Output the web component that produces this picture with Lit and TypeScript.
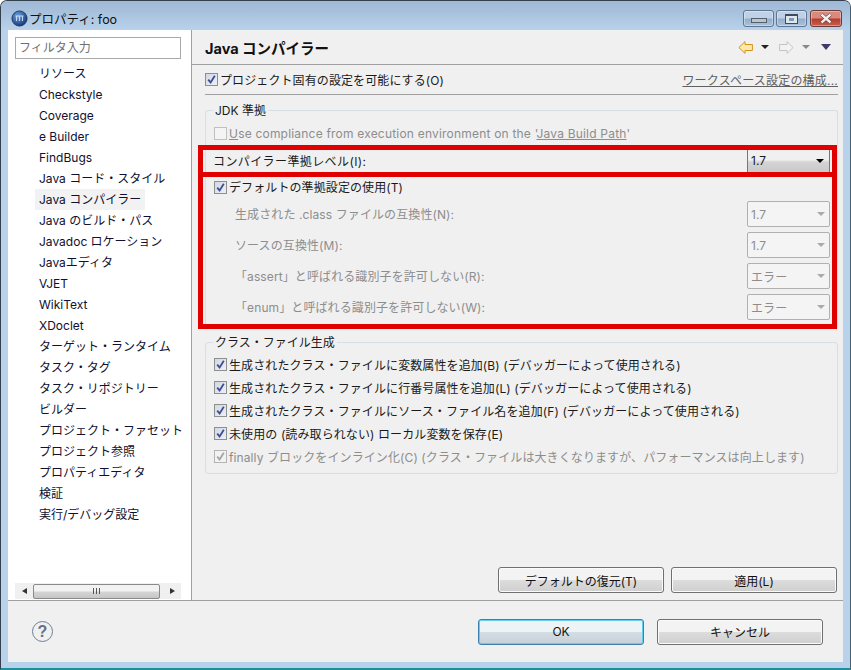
import { LitElement, html, css, svg } from "lit";
import { customElement } from "lit/decorators.js";

const TREE = ["リソース","Checkstyle","Coverage","e Builder","FindBugs","Java コード・スタイル","Java コンパイラー","Java のビルド・パス","Javadoc ロケーション","Javaエディタ","VJET","WikiText","XDoclet","ターゲット・ランタイム","タスク・タグ","タスク・リポジトリー","ビルダー","プロジェクト・ファセット","プロジェクト参照","プロパティエディタ","検証","実行/デバッグ設定"];

const check = (state: "on" | "off" | "dis" = "on") => html`<span class="cb ${state}">${state === "off" ? "" : svg`<svg width="11" height="11" viewBox="0 0 11 11"><path d="M2.2 5.6 L4.6 8.4 L8.8 1.8" fill="none" stroke="currentColor" stroke-width="1.8"/></svg>`}</span>`;

const sel = (t: string) => html`<div class="sel"><span>${t}</span><i class="tri"></i></div>`;

@customElement("app-root")
export class AppRoot extends LitElement {
  static styles = css`
    :host { display: block; width: 851px; height: 670px; overflow: hidden; background: #fff;
      font-family: "Inter", "Noto Sans CJK JP", sans-serif; font-size: 12px; color: #1a1a1a; }
    * { box-sizing: border-box; }
    .win { position: relative; width: 851px; height: 670px; display: flex; flex-direction: column; border-radius: 7px 7px 0 0;
      background: #b9d2eb; border: 1px solid #34404c; border-bottom: 2px solid #1f8f9c; border-right-color:#4a6070; overflow: hidden; }
    .title { height: 29px; flex: none; display: flex; align-items: center; padding: 6px 8px 0 10px; gap: 2px;
      background: linear-gradient(#9fb9d6, #a8c2de 40%, #b9d2eb); }
    .title .t { font-size: 12.5px; color: #111; flex: 1; margin-left: -1px; }
    .wb { width: 31px; height: 17px; border: 1px solid #5d7590; border-radius: 3px; display: flex; align-items: center; justify-content: center;
      background: linear-gradient(#bfd1e6 0 48%, #93aec9 52%, #a9c3dc); box-shadow: inset 0 0 0 1px rgba(255,255,255,.35); }
    .wb.x { background: linear-gradient(#d98a7e 0 48%, #b93a2c 52%, #c4604f); border-color: #6e3a34; width: 32px; margin-left:1px; }
    .min { width: 16px; height: 5px; background: #b9c4d0; border: 1px solid #55606e; margin-top: 3px; }
    .max { width: 13px; height: 10px; background: #dfe6ee; border: 1px solid #3f4b5c; border-top-width:2px; display:flex; align-items:center; justify-content:center; }
    .max::after { content:""; width:5px; height:3px; background:#7f9ab8; border:0; }

    .client { flex: 1; margin: 0 7px 6px; display: flex; flex-direction: column; background: #f0f0f0; min-height: 0; }
    .main { height: 571px; flex: none; display: flex; border-bottom: 1px solid #a0a0a0; }
    .left { width: 184px; flex: none; background: #fff; border-right: 1px solid #a0a0a0; padding: 7px 10px 0 7px; display: flex; flex-direction: column; }
    .filter { height: 22px; flex: none; border: 1px solid #a9a9a9; padding: 0 3px; line-height: 20px; color: #6f6f6f; }
    .tree { flex: 1; margin-top: 4px; padding-left: 20px; }
    .node { height: 21px; line-height: 21px; white-space: nowrap; width: max-content; padding: 0 4px; color: #101030; }
    .node.sel-node { background: #f2f2f2; }
    .hbar { height: 16px; flex: none; background: #f0f0f0; display: flex; align-items: center; margin: 0 0 1px; }
    .arrow { width: 18px; display:flex; justify-content:center; }
    .al { border: 3.5px solid transparent; border-right: 5px solid #333; border-left: 0; }
    .ar { border: 3.5px solid transparent; border-left: 5px solid #333; border-right: 0; }
    .thumb { width: 127px; height: 15px; border: 1px solid #8a8a8a; border-radius: 2px; background: linear-gradient(#f2f2f2 0 45%, #d4d4d4 55%, #c6c6c6);
      display:flex; align-items:center; justify-content:center; gap:1px; }
    .thumb b { width:1px; height:6px; background:#555; margin:0 .5px; }
    .spacer { flex: 1; }

    .right { flex: 1; min-width: 0; display: flex; flex-direction: column; padding: 0 5px 7px 13px; letter-spacing: .1px; }
    .head { height: 35px; flex: none; display: flex; align-items: center; margin: 0 -5px 0 -13px; padding: 0 12px 0 13px; border-bottom: 1px solid #a0a0a0; }
    .head h1 { margin: 0; font-size: 14.5px; font-weight: 700; flex: 1; color: #111; letter-spacing: 0; }
    .navs { display:flex; align-items:center; }
    .nt { display: block; width: 0; height: 0; border: 4px solid transparent; border-top: 4px solid #222; border-bottom: 0; }
    .nt.g { border-top-color: #888; }
    .nt.m { border-width: 6px 5px 0; border-top-color: #3f3a6a; }
    .navs .a { margin-right: 8px; }
    .navs .b { margin-right: 10px; }
    .navs .c { margin-right: 11px; }
    .tri { display: block; width: 0; height: 0; border: 4px solid transparent; border-top: 4px solid #aaa; border-bottom: 0; }
    .proj { height: 30px; flex: none; display: flex; align-items: center; gap: 2px; border-bottom: 1px solid #a0a0a0; }
    .proj .lbl { flex: 1; }
    .link { color: #606060; text-decoration: underline; letter-spacing: .2px; }
    .cb { width: 13px; height: 13px; flex: none; border: 1px solid #8e8f8f; background: linear-gradient(135deg,#d3d7e2,#eef0f6); color: #3c4f94; display: inline-flex; align-items: center; justify-content: center; }
    .cb.dis { background:#f2f2f2; border-color:#b4b4b4; color:#a4a4a4; }
    .cb.off { background:#f4f4f4; border-color:#c0c0c0; }
    .row { display: flex; align-items: center; gap: 2px; white-space: nowrap; }
    .dim { color: #8d8d8d; }
    .group { position: relative; border: 1px solid #d5dfe5; border-radius: 3px; flex: none; }
    .legend { position: absolute; top: -8px; left: 7px; background: #f0f0f0; padding: 0 2px; line-height: 15px; letter-spacing: 0; }
    .g1 { margin-top: 15px; height: 220px; padding: 0 7px 0 8px; border-bottom: 0; }
    .g1 .u { height: 21px; margin-top: 11px; letter-spacing: .2px; padding-top: 1px; }
    .u2 { text-decoration: underline; }
    .lvl { height: 30px; margin-top: 3px; margin-left: -1px; display: flex; align-items: center; justify-content: space-between; }
    .lvl > span { letter-spacing: .4px; padding-bottom: 2px; }
    .lvl .v { width: 83px; height: 24px; background: linear-gradient(#f0f0f0 0 45%, #d4d4d4 55%, #c8c8c8); border-left: 1px solid #777; border-right: 1px solid #777;
      display: flex; align-items: center; justify-content: space-between; padding: 0 5px 0 3px; }
    .lvl .v span { padding-bottom: 2px; }
    .lvl .tri { border-top-color: #000; }
    .def { height: 22px; }
    .def > span:last-child { padding-bottom: 2px; }
    .opts { display: grid; row-gap: 5px; margin-top: 3px; margin-left: 21px; }
    .opt { height: 26px; display: flex; align-items: center; justify-content: space-between; color: #8d8d8d; }
    .opt > span { padding-bottom: 2px; }
    .sel { width: 83px; height: 26px; border: 1px solid #b0b0b0; border-radius: 2px; background: #f4f4f4; display: flex; align-items: center; justify-content: space-between; padding: 0 4px 0 3px; color:#8d8d8d; }
    .g2 { margin-top: 12px; height: 132px; padding: 10px 8px 0; display: flex; flex-direction: column; }
    .g2 .row { height: 23px; }
    .acts { margin-top: auto; margin-right: 1px; display: flex; justify-content: flex-end; gap: 7px; letter-spacing: 0; }
    .btn { width: 166px; height: 26px; border: 1px solid #707070; border-radius: 3px; display: flex; align-items: center; justify-content: center; color:#111;
      background: linear-gradient(#f3f3f3 0 48%, #dcdcdc 52%, #cfcfcf); box-shadow: inset 0 0 0 1px #fbfbfb; }
    .btn.def-b { border-color: #3c7fb1; box-shadow: inset 0 0 0 1px #5fd0f2; background: linear-gradient(#eef3f6 0 48%, #d3dde4 52%, #c8d0d6); }
    .foot { flex: 1; display: flex; align-items: center; padding: 0 20px 0 24px; gap: 13px; }
    .help { width: 21px; height: 21px; border: 1.5px solid #6d7f9b; border-radius: 50%; display: flex; align-items: center; justify-content: center; font: 700 16px "Liberation Sans", sans-serif; color: #5f7190; margin-right: auto; }
    .red { position: absolute; left: 197px; top: 144px; width: 639px; height: 184px; border: 5px solid #e00000; pointer-events: none; }
    .red::after { content: ""; position: absolute; left: -5px; right: -5px; top: 22px; height: 5px; background: #e00000; }
  `;

  render() {
    return html`<div class="win">
      <div class="title">
        <svg width="17" height="17" viewBox="0 0 17 17"><defs><radialGradient id="s" cx=".4" cy=".35" r=".7"><stop offset="0" stop-color="#6ea8e8"/><stop offset="1" stop-color="#0f2f70"/></radialGradient></defs><circle cx="8.5" cy="8.5" r="7.6" fill="url(#s)" stroke="#1d2d4a" stroke-width=".8"/><path d="M5.5 6v5M8.5 6v5M11.5 6v5M4.5 6h8" stroke="#cfe0f5" stroke-width=".9" fill="none"/></svg>
        <span class="t">プロパティ: foo</span>
        <div class="wb"><span class="min"></span></div>
        <div class="wb"><span class="max"></span></div>
        <div class="wb x"><svg width="16" height="11" viewBox="0 0 16 11"><path d="M3.5 1.5 12.5 9.5M12.5 1.5 3.5 9.5" stroke="#4a2a28" stroke-width="3.6"/><path d="M3.5 1.5 12.5 9.5M12.5 1.5 3.5 9.5" stroke="#f4f0ee" stroke-width="2.4"/></svg></div>
      </div>
      <div class="client">
        <div class="main">
          <div class="left">
            <div class="filter">フィルタ入力</div>
            <div class="tree">${TREE.map((t, i) => html`<div class="node ${i === 6 ? "sel-node" : ""}">${t}</div>`)}</div>
            <div class="hbar">
              <span class="arrow"><i class="al"></i></span>
              <div class="thumb"><b></b><b></b><b></b></div>
              <span class="spacer"></span>
              <span class="arrow"><i class="ar"></i></span>
            </div>
          </div>
          <div class="right">
            <div class="head">
              <h1>Java コンパイラー</h1>
              <div class="navs">
                <svg class="a" width="15" height="13" viewBox="0 0 15 13"><path d="M7 .6 .9 6.5 7 12.4V9.5h7.4v-6H7z" fill="#ffe9a6" stroke="#d2951e"/></svg>
                <i class="nt b"></i>
                <svg class="a" width="15" height="13" viewBox="0 0 15 13"><path d="M8 .6l6.1 5.9L8 12.4V9.5H.6v-6H8z" fill="#f2f2f2" stroke="#c4c4c4"/></svg>
                <i class="nt g c"></i>
                <i class="nt m"></i>
              </div>
            </div>
            <div class="proj">${check()}<span class="lbl">プロジェクト固有の設定を可能にする(O)</span><span class="link">ワークスペース設定の構成...</span></div>
            <div class="group g1">
              <div class="legend">JDK 準拠</div>
              <div class="row u dim">${check("off")}<span><span class="u2">U</span>se compliance from execution environment on the '<span class="u2">Java Build Path</span>'</span></div>
              <div class="lvl"><span>コンパイラー準拠レベル(I):</span><div class="v"><span>1.7</span><i class="tri"></i></div></div>
              <div class="row def">${check()}<span>デフォルトの準拠設定の使用(T)</span></div>
              <div class="opts">
                <div class="opt"><span>生成された .class ファイルの互換性(N):</span>${sel("1.7")}</div>
                <div class="opt"><span>ソースの互換性(M):</span>${sel("1.7")}</div>
                <div class="opt"><span>「assert」と呼ばれる識別子を許可しない(R):</span>${sel("エラー")}</div>
                <div class="opt"><span>「enum」と呼ばれる識別子を許可しない(W):</span>${sel("エラー")}</div>
              </div>
            </div>
            <div class="group g2">
              <div class="legend">クラス・ファイル生成</div>
              <div class="row">${check()}<span>生成されたクラス・ファイルに変数属性を追加(B) (デバッガーによって使用される)</span></div>
              <div class="row">${check()}<span>生成されたクラス・ファイルに行番号属性を追加(L) (デバッガーによって使用される)</span></div>
              <div class="row">${check()}<span>生成されたクラス・ファイルにソース・ファイル名を追加(F) (デバッガーによって使用される)</span></div>
              <div class="row">${check()}<span>未使用の (読み取られない) ローカル変数を保存(E)</span></div>
              <div class="row dim">${check("dis")}<span>finally ブロックをインライン化(C) (クラス・ファイルは大きくなりますが、パフォーマンスは向上します)</span></div>
            </div>
            <div class="acts"><div class="btn">デフォルトの復元(T)</div><div class="btn">適用(L)</div></div>
          </div>
        </div>
        <div class="foot">
          <div class="help">?</div>
          <div class="btn def-b">OK</div>
          <div class="btn">キャンセル</div>
        </div>
      </div>
      <div class="red"></div>
    </div>`;
  }
}
